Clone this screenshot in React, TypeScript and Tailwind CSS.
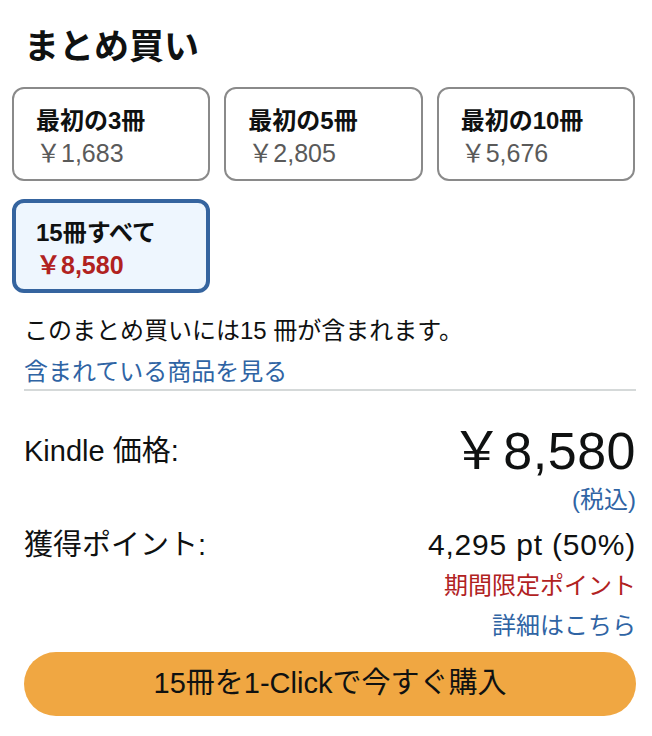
import React from 'react';

const font = { fontFamily: '"Liberation Sans", "Noto Sans CJK JP", sans-serif' };

const options = [
  { name: '最初の3冊', price: '￥1,683' },
  { name: '最初の5冊', price: '￥2,805' },
  { name: '最初の10冊', price: '￥5,676' },
];

export default function App() {
  return (
    <div className="w-[652px] h-[736px] bg-white text-[#0f1111] overflow-hidden" style={font}>
      <h2 className="pl-6 pt-[25px] text-[35px] leading-[44px] font-bold">まとめ買い</h2>

      <div className="pl-3 pr-[17px] mt-[18px] grid grid-cols-3 gap-x-[14px] gap-y-[18px]">
        {options.map((o) => (
          <div
            key={o.name}
            className="h-[94px] rounded-[12px] border-2 border-[#8a8a8a] flex flex-col justify-center pl-[22px] pt-[6px]"
          >
            <div className="text-[24px] leading-[33px] font-bold">{o.name}</div>
            <div className="text-[25px] leading-[33px] text-[#5a5a5a]">{o.price}</div>
          </div>
        ))}
        <div className="h-[94px] rounded-[12px] border-4 border-[#35649f] bg-[#eef6fe] flex flex-col justify-center pl-[20px] pt-[6px]">
          <div className="text-[24px] leading-[33px] font-bold">15冊すべて</div>
          <div className="text-[25px] leading-[33px] font-bold text-[#b1221f]">￥8,580</div>
        </div>
      </div>

      <div className="pl-6 pr-4">
        <p className="mt-[22px] text-[24px] leading-[32px]">このまとめ買いには15 冊が含まれます。</p>
        <a className="block mt-[9px] text-[24px] leading-[32px] text-[#2f64a4]">含まれている商品を見る</a>
        <div className="mt-[1px] h-[2px] bg-[#d5d9d9]" />

        <div className="mt-[30px] flex items-start justify-between">
          <span className="mt-[10px] text-[29px] leading-[40px]">Kindle 価格:</span>
          <span className="text-[52px] leading-[60px] tracking-[0.5px]">￥8,580</span>
        </div>
        <div className="mt-[3px] text-right text-[24px] leading-[32px] text-[#2f64a4]">(税込)</div>

        <div className="mt-[9px] flex items-center justify-between text-[29px] leading-[40px]">
          <span>獲得ポイント:</span>
          <span className="text-[30px] tracking-[0.8px]">4,295 pt (50%)</span>
        </div>
        <div className="mt-[5px] text-right text-[24px] leading-[32px] text-[#b1221f]">期間限定ポイント</div>
        <div className="mt-[8px] text-right text-[24px] leading-[32px] text-[#2f64a4]">詳細はこちら</div>

        <button className="mt-[10px] w-full h-[64px] rounded-full bg-[#f0a742] text-[29px] text-[#0f1111]">
          15冊を1-Clickで今すぐ購入
        </button>
      </div>
    </div>
  );
}
